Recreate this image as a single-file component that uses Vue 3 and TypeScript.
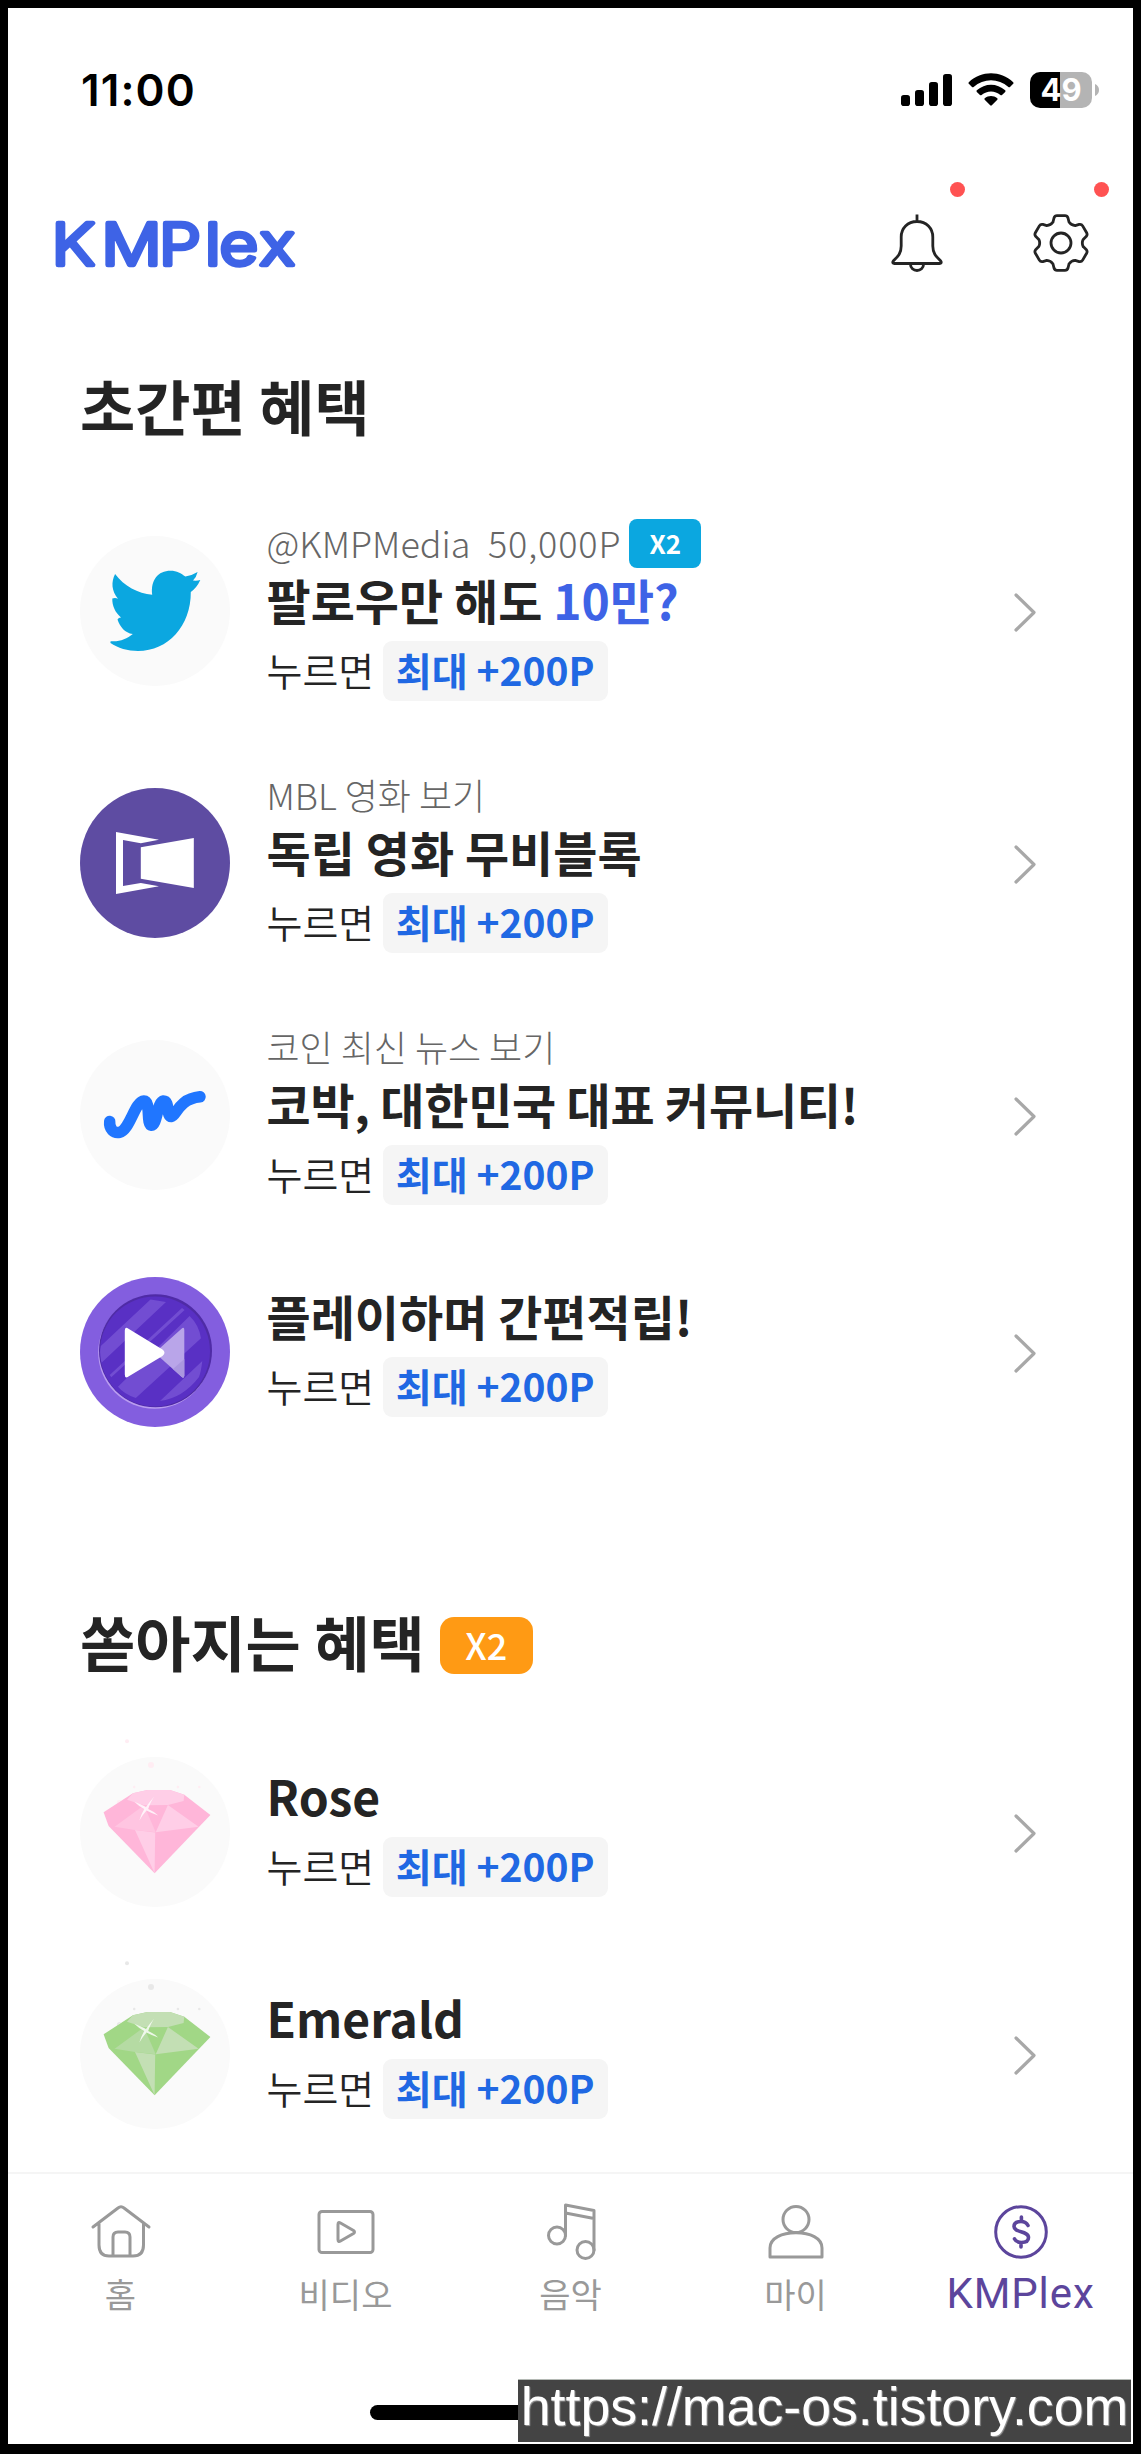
<script setup lang="ts">
type IconName = 'bird' | 'movie' | 'wave' | 'coin' | 'gem'

interface Reward {
  icon: IconName
  title: string
  accent?: string
  caption?: string
  points?: string
  badge?: string
  tight?: boolean
  disc: string
  gem?: { base: string; light: string; mid: string; dot: string }
}

const quick: Reward[] = [
  { icon: 'bird', disc: '#fafafa', caption: '@KMPMedia', points: '50,000P', badge: 'X2', title: '팔로우만 해도 ', accent: '10만?' },
  { icon: 'movie', disc: '#5e4ca2', caption: 'MBL 영화 보기', title: '독립 영화 무비블록' },
  { icon: 'wave', disc: '#fafafa', caption: '코인 최신 뉴스 보기', title: '코박, 대한민국 대표 커뮤니티!', tight: true },
  { icon: 'coin', disc: '#835edf', title: '플레이하며 간편적립!' },
]

const pouring: Reward[] = [
  { icon: 'gem', disc: '#fafafa', title: 'Rose', gem: { base: '#ffb6d9', light: '#ffcee7', mid: '#ffc5e1', dot: '#ffedf3' } },
  { icon: 'gem', disc: '#fafafa', title: 'Emerald', gem: { base: '#a1d786', light: '#c3dfb4', mid: '#b5dba3', dot: '#e8e8e8' } },
]

const sections = [
  { title: '초간편 혜택', badge: '', rewards: quick },
  { title: '쏟아지는 혜택', badge: 'X2', rewards: pouring },
]

const tabs = [
  { id: 'home', label: '홈' },
  { id: 'video', label: '비디오' },
  { id: 'music', label: '음악' },
  { id: 'my', label: '마이' },
  { id: 'plex', label: 'KMPlex' },
]

// Outline of the settings gear: one tooth, repeated every 60 degrees.
function gearOutline(): string {
  const parts: string[] = []
  for (let i = 0; i < 6; i++) {
    const a = (i * Math.PI) / 3
    const p = (x: number, y: number) =>
      `${(x * Math.cos(a) - y * Math.sin(a)).toFixed(2)} ${(x * Math.sin(a) + y * Math.cos(a)).toFixed(2)}`
    parts.push(
      `${i ? 'L' : 'M'}${p(-8, -21)}L${p(-7, -25)}Q${p(-6.2, -27.3)} ${p(-4, -27.3)}` +
        `L${p(4, -27.3)}Q${p(6.2, -27.3)} ${p(7, -25)}L${p(8, -21)}Q${p(10.2, -17.7)} ${p(14.2, -17.4)}`,
    )
  }
  return parts.join('') + 'Z'
}
const gear = gearOutline()
</script>

<template>
  <div class="screen">
    <div class="status">
      <span class="clock">11:00</span>
      <div class="status-icons">
        <svg width="51" height="32" viewBox="0 0 51 32">
          <rect x="0" y="21" width="9" height="11" rx="2.8" />
          <rect x="14" y="16" width="9" height="16" rx="2.8" />
          <rect x="28" y="8" width="9" height="24" rx="2.8" />
          <rect x="42" y="0" width="9" height="32" rx="2.8" />
        </svg>
        <svg class="wifi" width="46" height="34" viewBox="0 0 46 34">
          <path d="M.8 9.200C13.500 -2.600 32.500 -2.600 45.200 9.200Q45.900 10 45.200 10.800L42 14Q41.200 14.700 40.400 14C30.400 5 15.600 5 5.600 14Q4.800 14.700 4 14L.8 10.800Q.1 10 .8 9.200Z" />
          <path d="M8.800 17.300C17 9.800 29 9.800 37.200 17.300Q37.900 18.100 37.200 18.900L34 22Q33.200 22.700 32.400 22C27 17.300 19 17.300 13.600 22Q12.800 22.700 12 22L8.800 18.900Q8.100 18.100 8.800 17.300Z" />
          <path d="M16.700 25.200C20.400 22.200 25.600 22.200 29.300 25.200Q30 26 29.300 26.700L23.800 32.300Q23 33 22.200 32.300L16.700 26.700Q16 26 16.700 25.200Z" />
        </svg>
        <div class="battery"><span>49</span></div>
        <svg class="nub" width="4" height="12" viewBox="0 0 4 12"><path d="M0 0Q4 1.800 4 6T0 12Z" fill="#b4b4b4" /></svg>
      </div>
    </div>

    <header class="header">
      <svg class="wordmark" width="280" height="80" viewBox="40 200 280 80">
        <g transform="scale(1.15 1)">
          <text y="264.800" x="45 88.300 138.300 178.300 190.900 225.700">KMPlex</text>
        </g>
      </svg>
      <div class="actions">
        <button class="action" aria-label="알림">
          <svg width="54" height="60" viewBox="890 212 54 60" class="line">
            <path d="M917 213.500V220M917 220.500C907.500 220.500 901.200 227.500 901.200 236V245C901.200 253.500 896.500 256.500 893.300 260Q891.800 262.300 894.600 262.500H939.400Q942.200 262.300 940.700 260C937.500 256.500 932.800 253.500 932.800 245V236C932.800 227.500 926.500 220.500 917 220.500ZM910.500 263.500A6.500 6 0 0 0 923.500 263.500" />
          </svg>
          <i class="dot" />
        </button>
        <button class="action" aria-label="설정">
          <svg width="60" height="60" viewBox="-30 -30 60 60" class="line">
            <path :d="gear" />
            <circle r="10" />
          </svg>
          <i class="dot" />
        </button>
      </div>
    </header>

    <main>
      <section v-for="s in sections" :key="s.title" class="section">
        <h2>{{ s.title }}<span v-if="s.badge" class="hot">{{ s.badge }}</span></h2>
        <div v-for="r in s.rewards" :key="r.title" class="reward" :class="{ short: !r.caption }">
          <svg class="avatar" width="150" height="150" viewBox="0 0 150 150">
            <circle cx="75" cy="75" r="75" :fill="r.disc" />
            <path
              v-if="r.icon === 'bird'"
              fill="#0ba7e0"
              d="M35.100 38C44 50 58 57.500 72.200 58.700C70.500 44 78 34.700 90.500 34.700C97 34.700 101 37.300 105.400 40.500Q112 39.500 117.600 36Q116.500 41 113 44.500Q117 45 120.300 44Q117 51.500 110.800 56C111 90 88 115 58 115C48 115 37.500 112 30.500 107Q30 105.500 31 105.200C39 106 47 103 52.800 98C45 97 40 91 37.500 83.500Q38.500 81.500 41 81.500C35.500 77 32 70 32.300 62.600Q35 61.200 38 62.700C31.500 55 31 46 35.100 38Z"
            />
            <g v-else-if="r.icon === 'movie'" fill="#fff">
              <path d="M36 44L79 51.700L60.800 55.300L43 52V98L60.800 95L79 98.300L36 106Z" />
              <path d="M60.800 59.300L113.800 50V100L60.800 90.700Z" />
            </g>
            <path
              v-else-if="r.icon === 'wave'"
              fill="none"
              stroke="#2076ff"
              stroke-width="11.500"
              stroke-linecap="round"
              stroke-linejoin="round"
              d="M29.700 81.500C29 89 34 93.500 39.500 92.300C50 90 54.500 61.500 64 61C71 61 66 84.500 71.500 85.200C77 85.500 77 62 83.500 61C90 61 86 77 91.500 76.500C96.500 76 98 59 120 56.800"
            />
            <g v-else-if="r.icon === 'coin'">
              <clipPath id="coin-face"><circle cx="75" cy="73.500" r="55" /></clipPath>
              <circle cx="74.500" cy="75.500" r="56.300" fill="#b99cf0" />
              <circle cx="75.500" cy="73.700" r="56.500" fill="#4f2ba6" />
              <circle cx="75" cy="74.500" r="55" fill="#5930c4" />
              <g clip-path="url(#coin-face)" fill="#724dd2">
                <path d="M70.500 22.500L86 25L21.500 85.700Q19 77 20.800 69ZM102 31L104.600 33L31.300 100.300L29.700 98ZM109.600 39Q119 48 121 61.300L55.800 121Q44 117 38 109.700ZM122.300 84Q121 95 119 100Q103 121 80 124Z" />
              </g>
              <path d="M104.300 53V98.500Q104.300 102 101.500 99.800L74.700 75.700L101.500 51.700Q104.300 49.500 104.300 53Z" fill="#b9a5e9" />
              <path d="M93 92L104.300 82V98.500Q104.300 102 101.500 99.800Z" fill="#ab97df" />
              <path d="M44.800 53.500Q44.800 49 48.500 51.700L82.500 72.500Q86.500 75.700 82.500 79L48.500 99.500Q44.800 102 44.800 97.500Z" fill="#fff" />
            </g>
            <g v-else-if="r.gem">
              <g :fill="r.gem.dot">
                <circle cx="47" cy="-15.700" r="2" />
                <circle cx="71" cy="8" r="3" />
                <circle cx="54.200" cy="30" r="1.300" />
                <circle cx="97.900" cy="30" r="1.300" />
                <circle cx="119.300" cy="30" r="1.300" />
                <path d="M37 47Q36 42.500 41 43Z" />
              </g>
              <path :fill="r.gem.base" d="M23.600 55.300L52.900 36.300L67.500 33H90L104.300 37.700L130.400 58L74.600 116.300L28.600 69Z" />
              <path :fill="r.gem.light" d="M47 42.700L52.900 36.300L67.500 33H90L104.300 37.700L103.600 44L87.900 48L64 48.300ZM87.900 48L118.600 69.700L75.700 75.300ZM55 73L75.200 75.500L74.600 116.300Z" />
              <path :fill="r.gem.mid" d="M64 48.300L75.700 75.300L55 73L34.600 69.700Z" />
              <path fill="#fff" fill-opacity=".8" d="M74 39.700Q69.500 47 68.200 52Q74 54.500 78.200 58.500Q71 56 66.500 53.500Q62.500 58 59.300 63.500Q61.500 56.500 64.300 52Q58.500 49 54.300 44.700Q61 47 66 50Q69.500 45 74 39.700Z" />
            </g>
          </svg>
          <div class="body">
            <div v-if="r.caption" class="caption">{{ r.caption }}<span v-if="r.points" class="points">{{ r.points }}</span><span v-if="r.badge" class="double">{{ r.badge }}</span></div>
            <div class="title" :class="{ tight: r.tight }">{{ r.title }}<em v-if="r.accent">{{ r.accent }}</em></div>
            <div class="tap">누르면<b>최대 +200P</b></div>
          </div>
          <svg class="chevron" width="22" height="40" viewBox="0 0 22 40"><path d="M2 3L20 20.500L2 38" /></svg>
        </div>
      </section>
    </main>

    <nav class="tabs">
      <div v-for="t in tabs" :key="t.id" class="tab" :class="{ active: t.id === 'plex' }">
        <svg width="64" height="60" viewBox="-32 -30 64 60">
          <g v-if="t.id === 'home'">
            <path d="M-28 -5L-3 -24Q0 -26.500 3 -24L28 -5M-22 -8V13Q-22 24 -12 24H12Q22.500 24 22.500 13V-8" />
            <path d="M-8 23V5Q-8 0 -3 0H4Q9 0 9 5V23" />
          </g>
          <g v-else-if="t.id === 'video'">
            <rect x="-27" y="-20.500" width="54" height="41" rx="3" />
            <path d="M-8 -7.500V7.500Q-8 10.500 -5.500 9L7.500 1.500Q9.500 0 7.500 -1.500L-5.500 -9Q-8 -10.500 -8 -7.500Z" />
          </g>
          <g v-else-if="t.id === 'music'">
            <circle cx="-14" cy="3.500" r="8.500" />
            <circle cx="14.500" cy="18" r="8.500" />
            <path d="M-5.500 3.500V-27L23 -21.500V18M-5.500 -19L23 -13.500" />
          </g>
          <g v-else-if="t.id === 'my'">
            <circle cx="0" cy="-12.500" r="13" />
            <path d="M-26 25V16C-26 6 -14 .8 0 .8S26 6 26 16V25Z" />
          </g>
          <g v-else>
            <circle cx="0" cy="0" r="25.300" />
            <path stroke-width="3.600" d="M7 -6.500Q5 -10.500 0 -10.500C-4.500 -10.500 -7 -8.500 -7 -5.500C-7 1 7.500 -1.500 7.500 5.500C7.500 9 4.500 10.500 .3 10.500Q-4.500 10.500 -6.500 6.800M.4 -15V-10.500M0 10.500V15" />
          </g>
        </svg>
        <span>{{ t.label }}</span>
      </div>
      <div class="home-indicator" />
      <div class="watermark">https://mac-os.tistory.com</div>
    </nav>
  </div>
</template>

<style>
body {
  margin: 0;
  background: #fff;
}
</style>

<style scoped>
.screen {
  box-sizing: border-box;
  display: flex;
  flex-direction: column;
  width: 1141px;
  height: 2454px;
  overflow: hidden;
  border: 8px solid #000;
  border-bottom-width: 10px;
  background: #fff;
  color: #242424;
  font-family: 'Noto Sans CJK KR', 'Noto Sans', sans-serif;
}
.status {
  flex: none;
  display: flex;
  align-items: center;
  justify-content: space-between;
  height: 164px;
  padding: 0 34px 0 73px;
  color: #000;
}
.clock {
  font: 600 44px/60px Inter, sans-serif;
  letter-spacing: 1.1px;
}
.status-icons {
  display: flex;
  align-items: center;
}
.wifi {
  margin-left: 16px;
}
.battery {
  width: 62px;
  height: 36px;
  margin-left: 16px;
  border-radius: 10px;
  background: linear-gradient(90deg, #000 30px, #b4b4b4 30px);
  color: #fff;
  text-align: center;
  font: 700 31px/36px Inter, sans-serif;
}
.nub {
  margin-left: 3px;
}
.header {
  flex: none;
  display: flex;
  align-items: center;
  justify-content: space-between;
  height: 142px;
  padding: 0 42px 0 32px;
}
.wordmark {
  margin-top: -6px;
  fill: #3e63e6;
  stroke: #3e63e6;
  stroke-width: 4.4px;
  stroke-linejoin: round;
  font: 300 58px Inter, sans-serif;
}
.actions {
  display: flex;
  align-items: center;
  gap: 87px;
}
.action {
  position: relative;
  display: block;
  padding: 0;
  border: 0;
  background: none;
}
.action svg {
  display: block;
}
.line {
  fill: none;
  stroke: #242424;
  stroke-width: 2.8px;
  stroke-linejoin: round;
}
.dot {
  position: absolute;
  right: -21px;
  top: -31px;
  width: 15px;
  height: 15px;
  border-radius: 50%;
  background: #ff5252;
}
.action:last-child .dot {
  right: -18px;
}
main {
  flex: none;
  height: 1858px;
  padding-top: 46px;
  box-sizing: border-box;
}
.section + .section {
  margin-top: 133px;
}
h2 {
  display: flex;
  align-items: center;
  margin: 0 0 35px;
  padding-left: 72px;
  font-size: 60px;
  font-weight: 700;
  line-height: 90px;
  white-space: pre;
}
.hot {
  width: 93px;
  height: 57px;
  margin: 9px 0 0 15px;
  border-radius: 14px;
  background: #ff9a14;
  color: #fff;
  text-align: center;
  font-size: 36px;
  font-weight: 500;
  line-height: 54px;
}
.reward {
  display: flex;
  align-items: center;
  height: 252px;
  padding: 0 97px 0 72px;
}
.reward.short {
  height: 222px;
}
.avatar {
  flex: none;
  overflow: visible;
}
.body {
  flex: 1;
  margin-left: 36.5px;
  padding-bottom: 4px;
  white-space: pre;
}
.caption {
  display: flex;
  align-items: center;
  height: 50px;
  color: #666;
  font-size: 36px;
  font-weight: 200;
  line-height: 48px;
}
.points {
  margin-left: 17.5px;
  letter-spacing: 0.85px;
}
.double {
  width: 72px;
  height: 49px;
  margin: 2px 0 0 8px;
  border-radius: 8px;
  background: #0ba7e0;
  color: #fff;
  text-align: center;
  font-size: 26px;
  font-weight: 700;
  line-height: 47px;
}
.title {
  height: 64px;
  margin-bottom: 10px;
  font-size: 48px;
  font-weight: 700;
  line-height: 64px;
}
.title.tight {
  letter-spacing: -0.25px;
}
.title em {
  color: #3e63e6;
  font-style: normal;
}
.tap {
  display: flex;
  height: 60px;
  font-size: 39px;
  font-weight: 350;
  line-height: 56px;
}
.tap b {
  width: 225px;
  margin-left: 8.5px;
  border-radius: 9px;
  background: #f5f5f5;
  color: #2068e3;
  text-align: center;
  font-size: 39px;
  font-weight: 700;
}
.chevron {
  flex: none;
  margin-top: 2px;
  fill: none;
  stroke: #a8a8a8;
  stroke-width: 3.2px;
  stroke-linecap: round;
  stroke-linejoin: round;
}
.tabs {
  position: relative;
  flex: 1;
  display: flex;
  box-sizing: border-box;
  padding: 28px 0 0;
  border-top: 2px solid #f5f5f5;
}
.tab {
  flex: 1 1 0;
  min-width: 0;
  display: flex;
  flex-direction: column;
  align-items: center;
  color: #999;
  font-size: 34px;
  font-weight: 400;
  line-height: 44px;
}
.tab svg {
  margin-bottom: 10px;
  fill: none;
  stroke: currentColor;
  stroke-width: 3px;
  stroke-linecap: round;
  stroke-linejoin: round;
}
.tab.active {
  color: #5c459c;
  font-family: Roboto, sans-serif;
  font-size: 42px;
}
.tab.active span {
  letter-spacing: 0.9px;
}
.home-indicator {
  position: absolute;
  left: 362px;
  bottom: 24px;
  width: 401px;
  height: 15px;
  border-radius: 8px;
  background: #000;
}
.watermark {
  position: absolute;
  right: 2px;
  bottom: 2px;
  box-sizing: border-box;
  width: 613px;
  height: 63px;
  border-top: 1px solid #b4b9b4;
  background: #444;
  color: #fff;
  text-align: center;
  font: 53.7px/53px 'Liberation Sans', sans-serif;
  text-shadow: 1px 1px 1px #999;
  white-space: nowrap;
}
</style>
